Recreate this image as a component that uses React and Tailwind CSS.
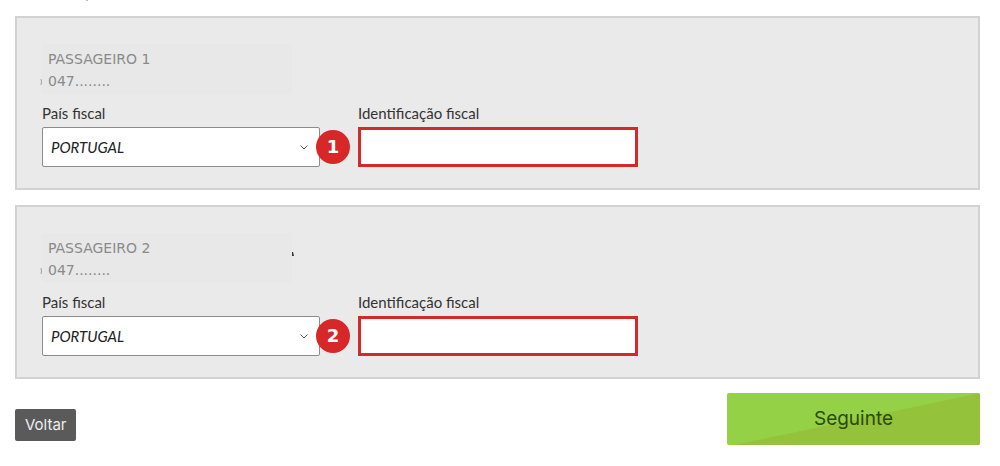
import { useState } from "react";

const PASSENGERS = [
  { id: 1, name: "PASSAGEIRO 1", document: "047........", tail: false },
  { id: 2, name: "PASSAGEIRO 2", document: "047........", tail: true },
];

const COUNTRIES = ["PORTUGAL", "ESPANHA", "FRANÇA"];

function StepBadge({ number }) {
  return (
    <span className="absolute top-1/2 -right-[30px] flex h-[34px] w-[34px] -translate-y-1/2 items-center justify-center rounded-full bg-[#d82729] font-['DejaVu_Sans',sans-serif] text-lg leading-none font-bold text-white">
      {number}
    </span>
  );
}

function PassengerCard({ passenger }) {
  const [country, setCountry] = useState("PORTUGAL");
  const [taxId, setTaxId] = useState("");

  return (
    <section className="border-2 border-[#d2d2d2] bg-[#eaeaea] px-[25px] pt-[26px] pb-[21px]">
      {/* Masked passenger details */}
      <div className="relative w-full max-w-[250px] bg-[#e8e8e8] px-[6px] pt-1 pb-[2px] font-['DejaVu_Sans',sans-serif] text-sm leading-[22px] text-[#8a8a8a]">
        <p>{passenger.name}</p>
        <p>{passenger.document}</p>
        <svg className="absolute bottom-2 -left-[2px] h-2 w-[3px]" viewBox="0 0 3 8" fill="none" aria-hidden="true">
          <path d="M1 1Q2 4 1 7" stroke="#a0a0a0" />
        </svg>
        {passenger.tail && (
          <svg className="absolute top-[19px] -right-[2px] h-1 w-[2px]" viewBox="0 0 2 4" aria-hidden="true">
            <path d="M0 0h1l1 4H0z" fill="#333333" />
          </svg>
        )}
      </div>

      <div className="mt-2 flex gap-[38px] text-[15px] text-[#333333]">
        <div className="w-full max-w-[278px]">
          <label htmlFor={`country-${passenger.id}`} className="block leading-[22px]">País fiscal</label>
          <div className="relative mt-[3px]">
            <select
              id={`country-${passenger.id}`}
              value={country}
              onChange={(e) => setCountry(e.target.value)}
              className="block h-10 w-full appearance-none rounded-xs border border-[#8c8c8c] bg-white px-2 text-[15px] text-[#222222] italic"
            >
              {COUNTRIES.map((name) => (
                <option key={name} value={name}>{name}</option>
              ))}
            </select>
            <svg className="pointer-events-none absolute top-[18px] right-3 h-[5px] w-2" viewBox="0 0 8 5" fill="none" aria-hidden="true">
              <path d="M.5.5 4 4 7.5.5" stroke="#555555" />
            </svg>
            <StepBadge number={passenger.id} />
          </div>
        </div>

        <div className="w-full max-w-[280px]">
          <label htmlFor={`tax-${passenger.id}`} className="block leading-[22px]">Identificação fiscal</label>
          <input
            id={`tax-${passenger.id}`}
            type="text"
            value={taxId}
            onChange={(e) => setTaxId(e.target.value)}
            className="mt-[3px] block h-10 w-full border-3 border-[#d02a2a] bg-white px-2"
          />
        </div>
      </div>
    </section>
  );
}

export default function App() {
  return (
    <main className="relative bg-white pt-4 pr-5 pb-4 pl-[15px] font-[Lato,sans-serif]">
      <span className="absolute top-0 left-[86px] h-px w-[2px] bg-[#bbbbbb]" />
      <form onSubmit={(e) => e.preventDefault()}>
        <div className="flex flex-col gap-[15px]">
          {PASSENGERS.map((passenger) => (
            <PassengerCard key={passenger.id} passenger={passenger} />
          ))}
        </div>

        <div className="mt-[14px] flex items-end justify-between">
          <button type="button" className="mb-1 h-8 rounded-xs bg-[#5a5a5a] px-[10px] font-[Inter,sans-serif] text-[15px] text-[#eeeeee]">
            Voltar
          </button>
          <button
            type="submit"
            className="relative h-[52px] w-full max-w-[253px] overflow-hidden rounded-xs bg-[#95d147] font-[Inter,sans-serif] text-[19px] text-[#2d4a0c]"
          >
            <svg className="absolute inset-0 h-full w-full" viewBox="0 0 253 52" preserveAspectRatio="none" aria-hidden="true">
              <path d="M8 52 253 0V52z" fill="#95c23b" />
            </svg>
            <span className="relative">Seguinte</span>
          </button>
        </div>
      </form>
    </main>
  );
}
